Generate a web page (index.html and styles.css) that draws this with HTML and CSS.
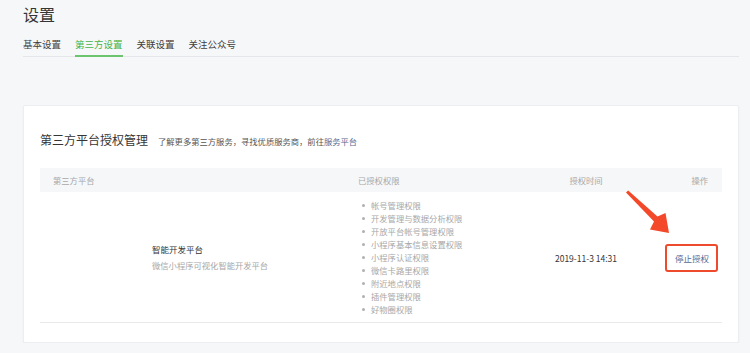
FILE: index.html
```html
<!DOCTYPE html>
<html lang="zh-CN">
<head>
  <meta charset="UTF-8" />
  <meta name="viewport" content="width=device-width, initial-scale=1.0" />
  <title>设置</title>
  <link rel="stylesheet" href="styles.css">
</head>
<body>
  <div class="page">
    <h1 class="page-title">设置</h1>
    <div class="tabs">
      <a class="tab">基本设置</a>
      <a class="tab active">第三方设置</a>
      <a class="tab">关联设置</a>
      <a class="tab">关注公众号</a>
    </div>

    <!-- 第三方平台授权 -->
    <div class="card">
      <div class="card-head">
        <h2 class="card-title">第三方平台授权管理</h2>
        <span class="card-tips">了解更多第三方服务，寻找优质服务商，前往<a class="link">服务平台</a></span>
      </div>

      <div class="table">
        <div class="thead">
          <div class="th">第三方平台</div>
          <div class="th">已授权权限</div>
          <div class="th center">授权时间</div>
          <div class="th right">操作</div>
        </div>
        <div class="tr">
          <div class="td platform">
            <div class="logo"></div>
            <div>
              <div class="platform-name">智能开发平台</div>
              <div class="platform-desc">微信小程序可视化智能开发平台</div>
            </div>
          </div>
          <div class="td">
            <ul class="perms">
              <li>帐号管理权限</li>
              <li>开发管理与数据分析权限</li>
              <li>开放平台帐号管理权限</li>
              <li>小程序基本信息设置权限</li>
              <li>小程序认证权限</li>
              <li>微信卡路里权限</li>
              <li>附近地点权限</li>
              <li>插件管理权限</li>
              <li>好物圈权限</li>
            </ul>
          </div>
          <div class="td center">2019-11-3 14:31</div>
          <div class="td right">
            <a class="link stop-btn">停止授权</a>
          </div>
          <svg class="arrow" width="44" height="44" viewBox="0 0 44 44">
            <polygon points="0,2.5 2.2,0.5 31.5,26.5 39.5,23 43,43 24,39.5 28,31.5" fill="#f3482a" />
          </svg>
        </div>
      </div>
    </div>
  </div>
</body>
</html>
```

FILE: styles.css
```css
body {
  margin: 0;
  background: #f6f7f9;
  font-family: "Noto Sans CJK SC", "Noto Sans", sans-serif;
  color: #353535;
}
.page {
  padding: 0 11px 0 23px;
}
.page-title {
  margin: 0;
  font-size: 16px;
  font-weight: normal;
  line-height: 29px;
}
.tabs {
  display: flex;
  gap: 14px;
  margin-top: 8px;
  border-bottom: 1px solid #e4e6e9;
}
.tab {
  font-size: 9.5px;
  line-height: 15px;
  padding-bottom: 3px;
  border-bottom: 2px solid transparent;
  margin-bottom: -1px;
  color: #3e3e3e;
}
.tab.active {
  color: #44b549;
  border-bottom-color: #6cc46f;
}
.card {
  margin-top: 48px;
  background: #fff;
  border: 1px solid #eceef1;
  border-radius: 2px;
  box-shadow: 0 1px 2px rgba(0, 0, 0, 0.05);
  padding: 23px 16px 19px 16px;
}
.card-head {
  display: flex;
  align-items: baseline;
  gap: 10px;
  margin-bottom: 17px;
}
.card-title {
  margin: 0;
  font-size: 12px;
  font-weight: normal;
  line-height: 22px;
}
.card-tips {
  font-size: 8.3px;
  color: #555;
}
.link {
  color: #576b95;
  cursor: pointer;
}
.thead, .tr {
  display: grid;
  grid-template-columns: 305px 196px 90px 90px;
}
.thead {
  background: #f6f7f9;
  height: 24px;
  align-items: center;
  font-size: 8.3px;
  color: #a8a8a8;
}
.th {
  padding: 0 13px;
}
.center {
  text-align: center;
}
.right {
  text-align: right;
}
.tr {
  position: relative;
  align-items: center;
  padding: 7px 0 6px;
  border-bottom: 1px solid #e9eaee;
  font-size: 8.5px;
}
.platform {
  display: flex;
  align-items: center;
  gap: 13px;
  padding-left: 13px;
}
.logo {
  width: 86px;
  height: 40px;
}
.platform-name {
  line-height: 13px;
  color: #353535;
}
.platform-desc {
  margin-top: 3px;
  line-height: 13px;
  color: #a8a8a8;
  font-size: 8.3px;
}
.perms {
  margin: 0;
  padding-left: 17px;
  list-style: none;
  font-size: 8.3px;
  color: #a8a8a8;
}
.perms li {
  line-height: 13px;
  display: flex;
  align-items: center;
}
.perms li::before {
  content: "";
  width: 3px;
  height: 3px;
  border-radius: 50%;
  background: #b0b0b0;
  margin-right: 6px;
}
.td.right {
  padding-right: 3px;
  display: flex;
  justify-content: flex-end;
}
.stop-btn {
  display: inline-block;
  line-height: 12px;
  padding: 6px 7px 6px 8px;
  border: 2px solid #ee4a2d;
  border-radius: 3px;
}
/* 标注箭头 */
.arrow {
  position: absolute;
  left: 586px;
  top: -2px;
}
```
